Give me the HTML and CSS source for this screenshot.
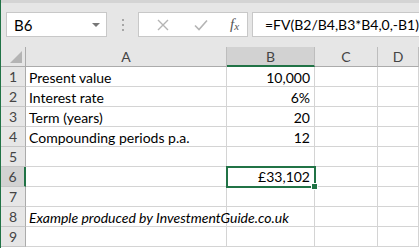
FILE: index.html
```html
<!DOCTYPE html>
<html lang="en">
<head>
    <meta charset="UTF-8">
    <title>FV spreadsheet</title>
    <link rel="stylesheet" href="styles.css">
</head>
<body>

    <div class="window">
        <div class="toolbar">
            <div class="namebox">
                <span>B6</span>
                <span class="caret"></span>
            </div>
            <div class="grip"><i></i><i></i><i></i></div>
            <div class="fbuttons">
                <svg class="ico" width="14" height="14" viewBox="0 0 14 14"><path d="M2 2 L12 12 M12 2 L2 12" stroke="#b4b4b4" stroke-width="1.4" fill="none"/></svg>
                <svg class="ico" width="16" height="14" viewBox="0 0 16 14"><path d="M2 7.5 L6 11.5 L14 2.5" stroke="#b4b4b4" stroke-width="1.6" fill="none"/></svg>
                <span class="fx">f<sub>x</sub></span>
            </div>
            <div class="formula">=FV(B2/B4,B3*B4,0,-B1)</div>
        </div>

        <div class="sheet">
            <div class="corner">
                <svg width="12" height="12" viewBox="0 0 12 12"><polygon points="12,0 12,12 0,12" fill="#b4b4b4"/></svg>
            </div>
            <div class="colhead">A</div>
            <div class="colhead on">B</div>
            <div class="colhead">C</div>
            <div class="colhead">D</div>

            <div class="rowhead">1</div>
            <div class="cell">Present value</div>
            <div class="cell num">10,000</div>
            <div class="cell"></div>
            <div class="cell"></div>

            <div class="rowhead">2</div>
            <div class="cell">Interest rate</div>
            <div class="cell num">6%</div>
            <div class="cell"></div>
            <div class="cell"></div>

            <div class="rowhead">3</div>
            <div class="cell">Term (years)</div>
            <div class="cell num">20</div>
            <div class="cell"></div>
            <div class="cell"></div>

            <div class="rowhead">4</div>
            <div class="cell">Compounding periods p.a.</div>
            <div class="cell num">12</div>
            <div class="cell"></div>
            <div class="cell"></div>

            <div class="rowhead">5</div>
            <div class="cell"></div>
            <div class="cell"></div>
            <div class="cell"></div>
            <div class="cell"></div>

            <div class="rowhead on">6</div>
            <div class="cell"></div>
            <div class="cell num active">£33,102<span class="handle"></span></div>
            <div class="cell"></div>
            <div class="cell"></div>

            <div class="rowhead">7</div>
            <div class="cell"></div>
            <div class="cell"></div>
            <div class="cell"></div>
            <div class="cell"></div>

            <div class="rowhead">8</div>
            <div class="cell note">Example produced by InvestmentGuide.co.uk</div>
            <div class="cell"></div>
            <div class="cell"></div>
            <div class="cell"></div>

            <div class="rowhead">9</div>
            <div class="cell"></div>
            <div class="cell"></div>
            <div class="cell"></div>
            <div class="cell"></div>
        </div>
    </div>

</body>
</html>
```

FILE: styles.css
```css
body { margin: 0; background: #fff; font-family: Lato, "Open Sans", sans-serif; font-size: 14px; color: #000; overflow: hidden; }
.window { width: 419px; height: 248px; border-left: 1px solid #217346; box-sizing: border-box; overflow: hidden; }

/* formula bar */
.toolbar { height: 47px; box-sizing: border-box; background: #e6e6e6; border-top: 3px solid #d4d4d4; display: flex; align-items: center; padding: 0 0 1px 5px; }
.namebox { width: 101px; height: 25px; box-sizing: border-box; background: #fff; border: 1px solid #c8c8c8; display: flex; align-items: center; justify-content: space-between; padding: 0 6px 0 7px; font-size: 15px; }
.caret { width: 0; height: 0; border-left: 4px solid transparent; border-right: 4px solid transparent; border-top: 4px solid #777; }
.grip { width: 31px; display: flex; flex-direction: column; align-items: center; gap: 3px; }
.grip i { width: 2px; height: 2px; background: #a6a6a6; }
.fbuttons { width: 110px; height: 25px; box-sizing: border-box; background: #fff; border: 1px solid #c8c8c8; display: flex; align-items: center; padding-left: 17px; }
.ico { margin-right: 23px; }
.fx { font-family: "Liberation Serif", serif; font-style: italic; font-size: 15px; color: #555; margin-left: -2px; }
.fx sub { font-size: 11px; vertical-align: -1px; }
.formula { flex: 1; height: 25px; box-sizing: border-box; margin-left: 4px; background: #fff; border: 1px solid #c8c8c8; border-right: 0; display: flex; align-items: center; padding-left: 12px; font-size: 14px; white-space: nowrap; }

/* grid */
.sheet { display: grid; grid-template-columns: 25px 201px 88px 63px 41px; grid-template-rows: 20px repeat(9, 20px); }
.sheet > div { box-sizing: border-box; border-right: 1px solid #d4d4d4; border-bottom: 1px solid #d4d4d4; white-space: nowrap; }
.corner { background: #e6e6e6; display: flex; align-items: flex-end; justify-content: flex-end; padding: 0 3px 3px 0; border-bottom-color: #ababab !important; border-right-color: #ababab !important; }
.colhead { background: #e6e6e6; color: #444; text-align: center; line-height: 19px; font-size: 14px; border-right-color: #bdbdbd !important; border-bottom-color: #ababab !important; }
.rowhead { background: #e6e6e6; color: #444; text-align: center; line-height: 19px; font-size: 14px; border-right-color: #ababab !important; border-bottom-color: #c6c6c6 !important; }
.colhead.on { background: #d2d2d2; border-bottom: 2px solid #217346 !important; }
.rowhead.on { background: #d2d2d2; border-right: 2px solid #217346 !important; }
.cell { line-height: 21px; padding: 0 3px; }
.num { text-align: right; padding-right: 4px; }
.note { font-style: italic; overflow: visible; }
.active { position: relative; outline: 2px solid #217346; outline-offset: -1px; line-height: 20px; }
.handle { position: absolute; right: -4px; bottom: -4px; width: 5px; height: 5px; background: #217346; border: 1px solid #fff; }
```
